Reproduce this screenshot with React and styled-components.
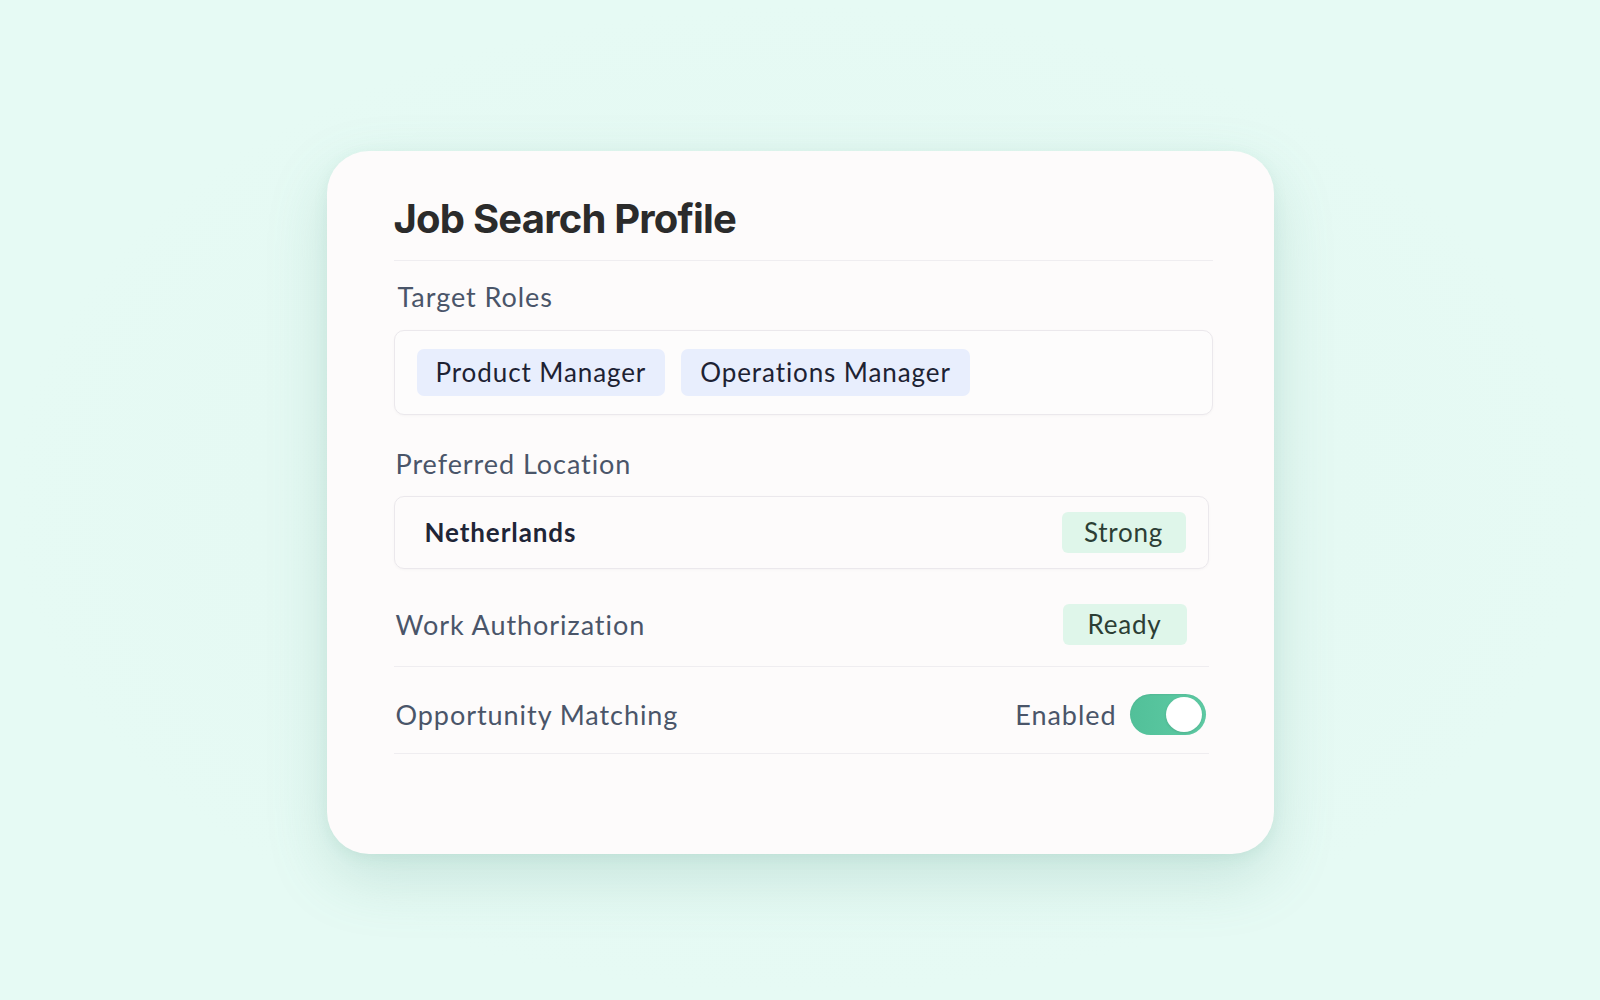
import React, { useState } from "react";
import styled, { createGlobalStyle } from "styled-components";

const GlobalStyle = createGlobalStyle`
  * { box-sizing: border-box; }
  html, body { margin: 0; padding: 0; }
  body {
    background: #e5f9f3;
    font-family: "Lato", "Open Sans", sans-serif;
    -webkit-font-smoothing: antialiased;
  }
`;

const Page = styled.div`
  width: 100%;
  height: 1000px;
  padding-top: 4px;
  display: flex;
  align-items: center;
  justify-content: center;
  background: radial-gradient(ellipse at 50% 50%, #e3f7f1 0%, #e6faf4 70%);
`;

const Card = styled.div`
  width: 947px;
  height: 703px;
  background: #fdfbfb;
  border-radius: 42px;
  padding: 44px 61px 0 67px;
  box-shadow: 0 24px 60px rgba(90, 160, 140, 0.22), 0 4px 14px rgba(90, 160, 140, 0.1);
`;

const Title = styled.h1`
  margin: 0;
  padding-bottom: 17px;
  border-bottom: 1px solid #efedf0;
  font-family: "Inter", "Lato", sans-serif;
  font-weight: 700;
  font-size: 40px;
  line-height: 48px;
  letter-spacing: -0.02em;
  color: #2b2b2b;
`;

const Label = styled.div`
  margin-top: ${(p) => p.$top}px;
  padding-left: ${(p) => p.$indent || 0}px;
  font-size: 27px;
  line-height: 32px;
  letter-spacing: 0.035em;
  color: #4a5569;
`;

const RolesBox = styled.div`
  margin-top: 17px;
  display: flex;
  gap: 16px;
  padding: 18px 22px;
  border: 1px solid #ebe8ec;
  border-radius: 10px;
  background: #fdfcfc;
  box-shadow: 0 1px 3px rgba(0, 0, 0, 0.03);
`;

const RoleChip = styled.span`
  display: inline-flex;
  align-items: center;
  height: 47px;
  padding: 0 19px;
  border-radius: 7px;
  background: #e8eefd;
  color: #1d2233;
  font-size: 26px;
  letter-spacing: 0.035em;
`;

const LocationBox = styled.div`
  margin-top: 16px;
  margin-right: 4px;
  height: 73px;
  display: flex;
  align-items: center;
  justify-content: space-between;
  padding: 0 22px 0 30px;
  border: 1px solid #ebe8ec;
  border-radius: 10px;
  box-shadow: 0 1px 3px rgba(0, 0, 0, 0.03);
`;

const Value = styled.span`
  font-size: 26px;
  font-weight: 700;
  letter-spacing: 0.035em;
  color: #1f2537;
`;

const StatusChip = styled.span`
  display: inline-flex;
  align-items: center;
  justify-content: center;
  width: 124px;
  height: 41px;
  border-radius: 6px;
  background: #dff6ea;
  color: #2c3e35;
  font-size: 26px;
  letter-spacing: 0.03em;
`;

const Row = styled.div`
  margin-top: ${(p) => p.$mt || 0}px;
  margin-right: 4px;
  display: flex;
  align-items: center;
  justify-content: space-between;
  padding: ${(p) => p.$pt}px 22px ${(p) => p.$pb}px 2px;
  border-bottom: 1px solid #efedf0;
`;

const RowLabel = styled.span`
  font-size: 27px;
  letter-spacing: 0.035em;
  color: #4a5569;
`;

const RowRight = styled.div`
  display: flex;
  align-items: center;
  gap: 13px;
`;

const Toggle = styled.button`
  position: relative;
  width: 76px;
  height: 41px;
  margin-right: -19px;
  padding: 0;
  border: none;
  border-radius: 21px;
  background: linear-gradient(90deg, #52c099, #5ecba4);
  box-shadow: inset 0 1px 2px rgba(0, 0, 0, 0.06);
  cursor: pointer;

  &::after {
    content: "";
    position: absolute;
    top: 3px;
    left: ${(p) => (p.$on ? "36px" : "3px")};
    width: 36px;
    height: 35px;
    border-radius: 50%;
    background: #fff;
    box-shadow: 0 1px 3px rgba(0, 0, 0, 0.12);
  }
`;

export default function App() {
  const [matching, setMatching] = useState(true);

  return (
    <>
      <GlobalStyle />
      <Page>
        <Card>
          <Title>Job Search Profile</Title>

          <Label $top={20} $indent={4}>Target Roles</Label>
          <RolesBox>
            <RoleChip>Product Manager</RoleChip>
            <RoleChip>Operations Manager</RoleChip>
          </RolesBox>

          <Label $top={33} $indent={2}>Preferred Location</Label>
          <LocationBox>
            <Value>Netherlands</Value>
            <StatusChip>Strong</StatusChip>
          </LocationBox>

          <Row $mt={14} $pt={21} $pb={21}>
            <RowLabel>Work Authorization</RowLabel>
            <StatusChip>Ready</StatusChip>
          </Row>

          <Row $pt={27} $pb={18}>
            <RowLabel>Opportunity Matching</RowLabel>
            <RowRight>
              <RowLabel>{matching ? "Enabled" : "Disabled"}</RowLabel>
              <Toggle
                $on={matching}
                aria-label="Opportunity Matching"
                onClick={() => setMatching(!matching)}
              />
            </RowRight>
          </Row>
        </Card>
      </Page>
    </>
  );
}
